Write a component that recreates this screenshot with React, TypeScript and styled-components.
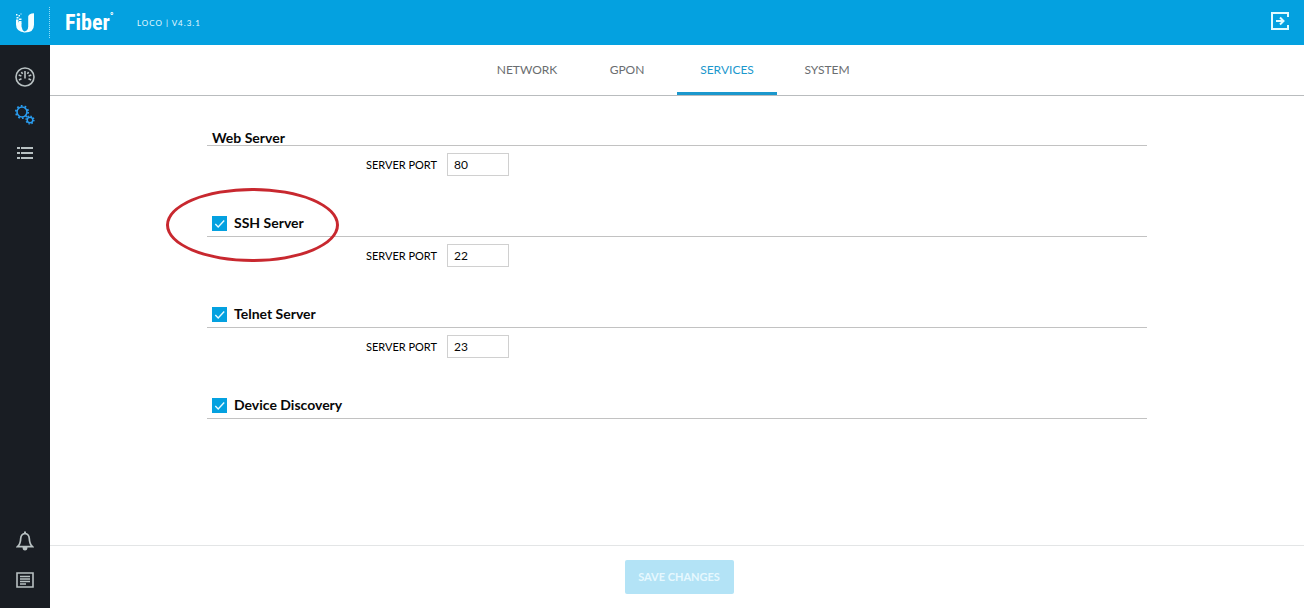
import React, { useState } from "react";
import styled, { createGlobalStyle } from "styled-components";

const GlobalStyle = createGlobalStyle`
  *, *::before, *::after { box-sizing: border-box; }
  body {
    margin: 0;
    background: #fff;
    color: #080808;
    font-family: Lato, "Open Sans", sans-serif;
  }
`;

const Page = styled.div`
  display: flex;
  flex-direction: column;
  min-height: 100vh;
`;

const Header = styled.header`
  display: flex;
  align-items: center;
  height: 45px;
  padding-right: 14px;
  background: #04a1e0;
  color: #fff;
`;

const LogoLink = styled.a`
  display: flex;
  justify-content: center;
  align-items: center;
  width: 50px;
  height: 31px;
  border-right: 1px dotted #8fdcf8;
`;

const Product = styled.span`
  width: 72px;
  padding-left: 15px;
  font: bold 22px/30px "Roboto Condensed", "Open Sans Condensed", "Liberation Sans Narrow", "Liberation Sans", sans-serif;
  white-space: nowrap;
`;

const Mark = styled.sup`
  display: inline-block;
  vertical-align: top;
  font-size: 10px;
  line-height: 18px;
`;

const Version = styled.span`
  padding-left: 15px;
  font-size: 8px;
  line-height: 12px;
  letter-spacing: 1px;
  color: #e4f9ff;
`;

const IconButton = styled.button`
  display: flex;
  margin-left: auto;
  padding: 0 0 3px;
  border: 0;
  background: none;
  color: #e2fbff;
`;

const Body = styled.div`
  display: flex;
  flex: 1;
`;

const Sidebar = styled.nav`
  display: flex;
  flex-direction: column;
  justify-content: space-between;
  width: 50px;
  padding: 13px 0 9px;
  background: #191d23;
`;

const SideGroup = styled.div<{ $gap?: number }>`
  display: flex;
  flex-direction: column;
  gap: ${(p) => p.$gap ?? 0}px;
`;

const SideLink = styled.a<{ $active?: boolean }>`
  display: flex;
  justify-content: center;
  align-items: center;
  height: 38px;
  color: ${(p) => (p.$active ? "#2a9df0" : "#b8c1c2")};
`;

const Content = styled.div`
  display: flex;
  flex: 1;
  flex-direction: column;
  min-width: 0;
`;

const Tabs = styled.nav`
  display: flex;
  justify-content: center;
  border-bottom: 1px solid #b9bcbe;
`;

const Tab = styled.a<{ $active?: boolean }>`
  width: 100px;
  height: 50px;
  border-bottom: 3px solid ${(p) => (p.$active ? "#1b98cd" : "transparent")};
  color: ${(p) => (p.$active ? "#1b98cd" : "#6a6d70")};
  font-size: 12px;
  line-height: 50px;
  text-align: center;
  text-decoration: none;
`;

const Form = styled.form`
  display: flex;
  flex: 1;
  flex-direction: column;
`;

const Sections = styled.main`
  flex: 1;
  width: 100%;
  max-width: 940px;
  margin: 0 auto;
  padding-top: 34px;
`;

const SectionHead = styled.div<{ $tight?: boolean }>`
  position: relative;
  display: flex;
  align-items: center;
  padding: 0 5px ${(p) => (p.$tight ? "0" : "5px")};
  border-bottom: 1px solid #c2c2c2;
`;

const Title = styled.h2`
  margin: 0;
  font-size: 14px;
  font-weight: 700;
  line-height: 15px;
`;

const CheckLabel = styled.label`
  display: flex;
  align-items: flex-start;
  gap: 7px;
  ${Title} { line-height: 13px; }
`;

const CheckWrap = styled.span`
  display: grid;
  width: 15px;
  height: 15px;
  & > * { grid-area: 1 / 1; }
  svg { z-index: 1; pointer-events: none; }
`;

const CheckInput = styled.input`
  width: 15px;
  height: 15px;
  margin: 0;
  appearance: none;
  border: 1px solid #04a1e0;
  background: #fff;
  &:checked { background: #04a1e0; }
`;

const Highlight = styled.span`
  position: absolute;
  top: -28px;
  left: -41px;
  width: 173px;
  height: 74px;
  border: 3px solid #c8282f;
  border-radius: 50%;
  pointer-events: none;
`;

const Field = styled.div`
  display: flex;
  align-items: center;
  gap: 10px;
  padding: 7px 0 40px;
`;

const FieldLabel = styled.label`
  width: 230px;
  font-size: 11px;
  font-weight: 400;
  line-height: 16px;
  text-align: right;
  color: #000;
`;

const PortInput = styled.input`
  width: 62px;
  height: 23px;
  padding: 0 6px;
  border: 1px solid #d0d0d0;
  background: #fff;
  color: #080808;
  font: 12px/16px Lato, sans-serif;
`;

const Footer = styled.footer`
  display: flex;
  justify-content: center;
  padding: 14px 0 14px 4px;
  border-top: 1px solid #e3e5e6;
`;

const SaveButton = styled.button`
  width: 109px;
  height: 34px;
  padding: 0;
  border: 0;
  border-radius: 2px;
  background: #b3e3f6;
  color: #e6f8fe;
  font: 700 11px/16px Lato, sans-serif;
`;

const UbiquitiLogo = () => (
  <svg width="20" height="20" viewBox="0 0 20 20" fill="#f4feff" aria-hidden="true">
    <path d="M1 8.500L6.500 10v3.500q.3 3.600 3.500 5.700Q1 19 1 11.500Z" />
    <path d="M13.200 3.500Q13.700.5 19 .2v11.500q0 7.800-9 7.800-1.800 0-3-.8 6.200 0 6.200-5Z" />
    <path d="M1 1h1.500v1.500H1zM3.500 2h1.500v1.500H3.500zM1.500 4h2v1.500h-2zM4 5.500h2.500V7H4zM1 6.500h2.500v3H1zM5.500.5h1v1h-1zM4 8h2.500v2.500H4z" />
  </svg>
);

const ExitIcon = () => (
  <svg width="20" height="20" viewBox="0 0 20 20" fill="none" stroke="currentColor" strokeWidth="2" aria-hidden="true">
    <path d="M18 6V2H2v16h16v-4M6 10h7M10 6.500l3.500 3.500-3.500 3.500" />
  </svg>
);

const GaugeIcon = () => (
  <svg width="20" height="20" viewBox="0 0 20 20" fill="none" stroke="currentColor" strokeWidth="1.600" aria-hidden="true">
    <circle cx="10" cy="10" r="9" />
    <path d="M10 4v7.500M6.400 5l1.200 1.900M13.600 5l-1.200 1.900M3.700 8l2.700 1M16.300 8l-2.700 1M3.900 13l2.600-1.200M16.100 13l-2.600-1.200" />
  </svg>
);

const GearsIcon = () => (
  <svg width="20" height="20" viewBox="0 0 20 20" fill="none" stroke="currentColor" aria-hidden="true">
    <circle cx="7" cy="7" r="5" strokeWidth="1.600" />
    <circle cx="7" cy="7" r="6.200" strokeWidth="1.700" strokeDasharray="1.700 2.196" />
    <circle cx="15" cy="15" r="2.800" strokeWidth="1.500" />
    <circle cx="15" cy="15" r="3.900" strokeWidth="1.400" strokeDasharray="1.400 1.663" />
  </svg>
);

const ListIcon = () => (
  <svg width="16" height="14" viewBox="0 0 16 14" fill="none" stroke="currentColor" strokeWidth="2" aria-hidden="true">
    <path d="M0 2h3M4 2h12M0 7h3M4 7h12M0 12h3M4 12h12" />
  </svg>
);

const BellIcon = () => (
  <svg width="18" height="20" viewBox="0 0 18 20" fill="none" stroke="currentColor" strokeWidth="1.700" aria-hidden="true">
    <path d="M9 2.500Q5 3 4.700 7.500 4.500 13 1.500 15.700h15Q13.500 13 13.300 7.500 13 3 9 2.500Z" />
    <path d="M9 .5V2.500" strokeWidth="2" />
    <path d="M6.500 16h5Q11.500 19.500 9 19.500T6.500 16Z" fill="currentColor" stroke="none" />
  </svg>
);

const LogIcon = () => (
  <svg width="18" height="16" viewBox="0 0 18 16" fill="none" stroke="currentColor" strokeWidth="1.600" aria-hidden="true">
    <path d="M1 1h16v14H1ZM4 4.500h10M4 7h10M4 9.500h10M4 12h6" />
  </svg>
);

const CheckMark = () => (
  <svg width="15" height="15" viewBox="0 0 15 15" fill="none" stroke="#e8faff" strokeWidth="1.400" aria-hidden="true">
    <path d="M3.300 8l2.900 2.900 6-6.300" />
  </svg>
);

type Service = {
  id: string;
  name: string;
  port?: string;
  toggle: boolean;
  highlighted?: boolean;
};

const services: Service[] = [
  { id: "web", name: "Web Server", port: "80", toggle: false },
  { id: "ssh", name: "SSH Server", port: "22", toggle: true, highlighted: true },
  { id: "telnet", name: "Telnet Server", port: "23", toggle: true },
  { id: "discovery", name: "Device Discovery", toggle: true },
];

const ServiceSection = ({ service }: { service: Service }) => {
  const [enabled, setEnabled] = useState(true);
  return (
    <section>
      <SectionHead $tight={!service.toggle}>
        {service.toggle ? (
          <CheckLabel>
            <CheckWrap>
              <CheckInput type="checkbox" checked={enabled} onChange={(e) => setEnabled(e.target.checked)} />
              {enabled && <CheckMark />}
            </CheckWrap>
            <Title>{service.name}</Title>
          </CheckLabel>
        ) : (
          <Title>{service.name}</Title>
        )}
        {service.highlighted && <Highlight />}
      </SectionHead>
      {service.port && (
        <Field>
          <FieldLabel htmlFor={`${service.id}-port`}>SERVER PORT</FieldLabel>
          <PortInput id={`${service.id}-port`} type="text" defaultValue={service.port} />
        </Field>
      )}
    </section>
  );
};

export default function App() {
  return (
    <Page>
      <GlobalStyle />
      <Header>
        <LogoLink href="#home" aria-label="Home"><UbiquitiLogo /></LogoLink>
        <Product>Fiber<Mark>°</Mark></Product>
        <Version>LOCO | V4.3.1</Version>
        <IconButton type="button" aria-label="Log out"><ExitIcon /></IconButton>
      </Header>
      <Body>
        <Sidebar>
          <SideGroup>
            <SideLink href="#dashboard" aria-label="Dashboard"><GaugeIcon /></SideLink>
            <SideLink href="#settings" aria-label="Settings" $active><GearsIcon /></SideLink>
            <SideLink href="#list" aria-label="List"><ListIcon /></SideLink>
          </SideGroup>
          <SideGroup $gap={1}>
            <SideLink href="#alerts" aria-label="Alerts"><BellIcon /></SideLink>
            <SideLink href="#log" aria-label="Log"><LogIcon /></SideLink>
          </SideGroup>
        </Sidebar>
        <Content>
          <Tabs>
            <Tab href="#network">NETWORK</Tab>
            <Tab href="#gpon">GPON</Tab>
            <Tab href="#services" $active>SERVICES</Tab>
            <Tab href="#system">SYSTEM</Tab>
          </Tabs>
          <Form onSubmit={(e) => e.preventDefault()}>
            <Sections>
              {services.map((s) => <ServiceSection key={s.id} service={s} />)}
            </Sections>
            <Footer><SaveButton type="submit" disabled>SAVE CHANGES</SaveButton></Footer>
          </Form>
        </Content>
      </Body>
    </Page>
  );
}
